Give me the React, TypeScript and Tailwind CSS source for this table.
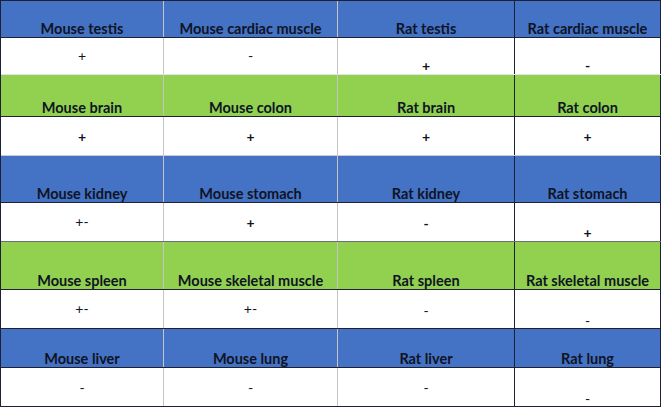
const cols = ["w-[163px]", "w-[174px]", "w-[177px]", "w-[146px]"];
const colBorder = [
  "border-r border-[#c4c4c4]",
  "border-r border-[#c4c4c4]",
  "border-r border-[#1c2233]",
  "border-r border-[#1c2233]",
];

type Cell = { t: string; pt: string; bold?: boolean };

type Section = {
  bg: string;
  h: string;
  names: string[];
  rowH: string;
  rowBorder: string;
  cells: Cell[];
};

const sections: Section[] = [
  {
    bg: "bg-[#4472c4]",
    h: "h-[37px]",
    names: ["Mouse testis", "Mouse cardiac muscle", "Rat testis", "Rat cardiac muscle"],
    rowH: "h-[37px]",
    rowBorder: "border-b border-[#e2e2e2]",
    cells: [
      { t: "+", pt: "pt-[9px]" },
      { t: "-", pt: "pt-[9px]" },
      { t: "+", pt: "pt-[19px]", bold: true },
      { t: "-", pt: "pt-[19px]", bold: true },
    ],
  },
  {
    bg: "bg-[#92d050]",
    h: "h-[42px]",
    names: ["Mouse brain", "Mouse colon", "Rat brain", "Rat colon"],
    rowH: "h-[39px]",
    rowBorder: "border-b border-[#c8ccd4]",
    cells: [
      { t: "+", pt: "pt-[11px]", bold: true },
      { t: "+", pt: "pt-[11px]", bold: true },
      { t: "+", pt: "pt-[11px]", bold: true },
      { t: "+", pt: "pt-[11px]", bold: true },
    ],
  },
  {
    bg: "bg-[#4472c4]",
    h: "h-[47px]",
    names: ["Mouse kidney", "Mouse stomach", "Rat kidney", "Rat stomach"],
    rowH: "h-[39px]",
    rowBorder: "border-b border-[#6b6f78]",
    cells: [
      { t: "+-", pt: "pt-[10px]" },
      { t: "+", pt: "pt-[11px]", bold: true },
      { t: "-", pt: "pt-[12px]", bold: true },
      { t: "+", pt: "pt-[21px]", bold: true },
    ],
  },
  {
    bg: "bg-[#92d050]",
    h: "h-[48px]",
    names: ["Mouse spleen", "Mouse skeletal muscle", "Rat spleen", "Rat skeletal muscle"],
    rowH: "h-[39px]",
    rowBorder: "border-b border-[#1c2233]",
    cells: [
      { t: "+-", pt: "pt-[10px]" },
      { t: "+-", pt: "pt-[10px]" },
      { t: "-", pt: "pt-[12px]" },
      { t: "-", pt: "pt-[22px]" },
    ],
  },
  {
    bg: "bg-[#4472c4]",
    h: "h-[39px]",
    names: ["Mouse liver", "Mouse lung", "Rat liver", "Rat lung"],
    rowH: "h-[39px]",
    rowBorder: "border-b border-[#1c2233]",
    cells: [
      { t: "-", pt: "pt-[11px]" },
      { t: "-", pt: "pt-[11px]" },
      { t: "-", pt: "pt-[11px]" },
      { t: "-", pt: "pt-[22px]" },
    ],
  },
];

export default function App() {
  return (
    <div className="w-[662px] h-[416px] bg-white font-['Lato',sans-serif] text-[#0f1424]">
      <div className="w-[661px] border-l border-t border-[#1c2233]">
        {sections.map((s, i) => (
          <div key={i}>
            <div className={`flex ${s.h} ${s.bg} border-b border-[#1c2233]`}>
              {s.names.map((n, j) => (
                <div
                  key={j}
                  className={`${cols[j]} ${colBorder[j]} flex items-end justify-center text-[14.5px] leading-[16px] font-bold whitespace-nowrap`}
                >
                  {n}
                </div>
              ))}
            </div>
            <div className={`flex ${s.rowH} ${s.rowBorder}`}>
              {s.cells.map((c, j) => (
                <div
                  key={j}
                  className={`${cols[j]} ${colBorder[j]} ${c.pt} flex justify-center text-[14px] leading-[18px] ${c.bold ? "font-bold" : "font-normal"}`}
                >
                  {c.t}
                </div>
              ))}
            </div>
          </div>
        ))}
      </div>
    </div>
  );
}
